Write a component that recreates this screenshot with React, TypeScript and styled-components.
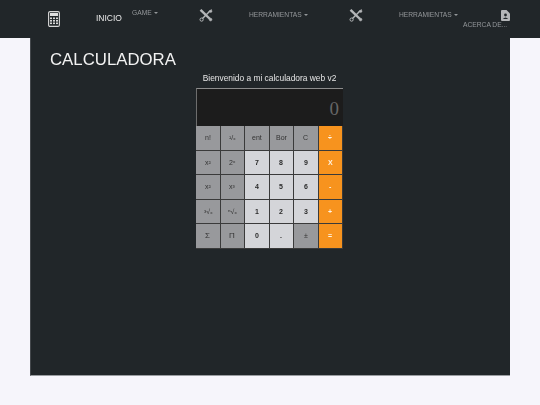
import React from "react";
import styled, { createGlobalStyle } from "styled-components";

const GlobalStyle = createGlobalStyle`
  html, body {
    margin: 0;
    padding: 0;
    background: #f6f5fb;
    font-family: "Liberation Sans", Arial, sans-serif;
  }
`;

const Page = styled.div`
  width: 540px;
  height: 405px;
  overflow: hidden;
`;

const NavBar = styled.nav`
  height: 38px;
  background: #212629;
  display: flex;
  position: relative;
`;

const NavSlot = styled.div<{ $left: number; $width: number }>`
  margin-left: ${(p) => p.$left}px;
  width: ${(p) => p.$width}px;
  flex: none;
  height: 38px;
  display: flex;
  flex-direction: column;
  align-items: center;
`;

const IconWrap = styled.span<{ $top: number }>`
  display: block;
  margin-top: ${(p) => p.$top}px;
  line-height: 0;
`;

const NavLink = styled.span<{ $top: number; $size?: number; $color?: string }>`
  margin-top: ${(p) => p.$top}px;
  font-size: ${(p) => p.$size ?? 6.7}px;
  line-height: 10px;
  color: ${(p) => p.$color ?? "#94979a"};
  white-space: nowrap;
  will-change: transform;
`;

const Caret = styled.i`
  display: inline-block;
  margin-left: 2px;
  vertical-align: 1.5px;
  border-top: 2px solid #94979a;
  border-left: 2px solid transparent;
  border-right: 2px solid transparent;
`;

const AboutLabel = styled.span`
  font-size: 6.7px;
  line-height: 9px;
  color: #94979a;
  white-space: nowrap;
  margin-top: -1px;
  margin-right: 40px;
  will-change: transform;
`;

const Panel = styled.main`
  width: 480px;
  height: 338px;
  margin-left: 30px;
  box-sizing: border-box;
  background: #212629;
  border-bottom: 1px solid #9a9da1;
  border-left: 1px solid #44484c;
  padding: 11px 0 0 19px;
`;

const Title = styled.h1`
  margin: 0;
  font-size: 16.8px;
  line-height: 21px;
  font-weight: 400;
  color: #f2f2f2;
  will-change: transform;
`;

const Greeting = styled.p`
  margin: 2px 0 0 146px;
  width: 147px;
  font-size: 8.4px;
  line-height: 12px;
  color: #e6e6e6;
  text-align: center;
  white-space: nowrap;
  will-change: transform;
`;

const Calc = styled.div`
  margin: 4px 0 0 146px;
  width: 147px;
  display: flex;
  flex-direction: column;
`;

const Display = styled.div`
  height: 38px;
  box-sizing: border-box;
  background: #1c1c1c;
  border-top: 1px solid #8d8d8d;
  border-left: 1px solid #6d6d6d;
  display: flex;
  align-items: center;
  justify-content: flex-end;
  padding: 2px 4px 0 0;
  font-family: "Liberation Serif", serif;
  font-size: 19px;
  color: #666;
`;

const Keys = styled.div`
  display: grid;
  grid-template-columns: repeat(6, 24.5px);
  grid-auto-rows: 24.5px;
`;

type Kind = "dark" | "light" | "op";

const Key = styled.button<{ $kind: Kind; $big?: boolean }>`
  appearance: none;
  margin: 0;
  padding: 0;
  border: none;
  border-right: 1px solid #3a3a3a;
  border-bottom: 1px solid #3a3a3a;
  font-family: "Liberation Sans", Arial, sans-serif;
  font-size: ${(p) => (p.$big ? 8 : 7)}px;
  font-weight: ${(p) => (p.$kind === "dark" ? 400 : 700)};
  color: ${(p) => (p.$kind === "op" ? "#fdf3e4" : p.$kind === "light" ? "#2a2a2a" : "#333")};
  background: ${(p) => (p.$kind === "op" ? "#f7931e" : p.$kind === "light" ? "#d4d5d9" : "#98999c")};
`;

const KeyLabel = styled.span`
  display: inline-block;
  will-change: transform;
`;

const ToolsIcon = () => (
  <svg width="14" height="13" viewBox="0 0 14 13" fill="none" stroke="#b4b6b8">
    <path d="M3.5 9.5 L11.5 1.5" strokeWidth="1.5" />
    <path d="M1.5 .8 L11 10" strokeWidth="2.4" />
    <path d="M9.5 2.5 L12.5 .5 L13 3 L11 3.5" fill="#b4b6b8" strokeWidth=".5" />
    <circle cx="2.6" cy="10.6" r="1.6" strokeWidth="1" />
    <circle cx="11.6" cy="10.6" r="1.4" fill="#b4b6b8" strokeWidth=".5" />
  </svg>
);

const CalcIcon = () => (
  <svg width="12" height="16" viewBox="0 0 12 16" fill="none">
    <rect x=".6" y=".6" width="10.8" height="14.8" rx="1.4" stroke="#d8d8d8" strokeWidth="1.1" />
    <rect x="2" y="2" width="8" height="3" fill="#e0e0e0" />
    {[2, 5, 8].flatMap((x) =>
      [6.5, 9, 11.5].map((y) => <rect key={`${x}-${y}`} x={x} y={y} width="2" height="1.6" fill="#d8d8d8" />)
    )}
  </svg>
);

const FileIcon = () => (
  <svg width="9" height="11" viewBox="0 0 9 11">
    <path d="M0 1 Q0 0 1 0 H5.5 L9 3.5 V10 Q9 11 8 11 H1 Q0 11 0 10 Z" fill="#b4b6b8" />
    <circle cx="4.5" cy="5" r="1.4" fill="#212629" />
    <path d="M1.8 9 Q4.5 5.8 7.2 9 Z" fill="#212629" />
  </svg>
);

const rows: [string, Kind][][] = [
  [["n!", "dark"], ["¹/ₓ", "dark"], ["ent", "dark"], ["Bor", "dark"], ["C", "dark"], ["÷", "op"]],
  [["x²", "dark"], ["2ˣ", "dark"], ["7", "light"], ["8", "light"], ["9", "light"], ["X", "op"]],
  [["x²", "dark"], ["x³", "dark"], ["4", "light"], ["5", "light"], ["6", "light"], ["-", "op"]],
  [["³√ₓ", "dark"], ["ⁿ√ₓ", "dark"], ["1", "light"], ["2", "light"], ["3", "light"], ["+", "op"]],
  [["Σ", "dark"], ["Π", "dark"], ["0", "light"], [".", "light"], ["±", "dark"], ["=", "op"]],
];

export default function App() {
  return (
    <Page>
      <GlobalStyle />
      <NavBar>
        <NavSlot $left={48} $width={12}>
          <IconWrap $top={11}>
            <CalcIcon />
          </IconWrap>
        </NavSlot>
        <NavSlot $left={36} $width={26}>
          <NavLink $top={13} $size={8.5} $color="#e8e8e8">
            INICIO
          </NavLink>
        </NavSlot>
        <NavSlot $left={10} $width={26}>
          <NavLink $top={8}>
            GAME
            <Caret />
          </NavLink>
        </NavSlot>
        <NavSlot $left={41} $width={14}>
          <IconWrap $top={9}>
            <ToolsIcon />
          </IconWrap>
        </NavSlot>
        <NavSlot $left={36} $width={58}>
          <NavLink $top={10}>
            HERRAMIENTAS
            <Caret />
          </NavLink>
        </NavSlot>
        <NavSlot $left={42} $width={14}>
          <IconWrap $top={9}>
            <ToolsIcon />
          </IconWrap>
        </NavSlot>
        <NavSlot $left={36} $width={58}>
          <NavLink $top={10}>
            HERRAMIENTAS
            <Caret />
          </NavLink>
        </NavSlot>
        <NavSlot $left={44} $width={9}>
          <IconWrap $top={10}>
            <FileIcon />
          </IconWrap>
          <AboutLabel>ACERCA DE...</AboutLabel>
        </NavSlot>
      </NavBar>
      <Panel>
        <Title>CALCULADORA</Title>
        <Greeting>Bienvenido a mi calculadora web v2</Greeting>
        <Calc>
          <Display>0</Display>
          <Keys>
            {rows.flat().map(([label, kind], i) => (
              <Key key={i} $kind={kind} $big={label === "Σ" || label === "Π"}>
                <KeyLabel>{label}</KeyLabel>
              </Key>
            ))}
          </Keys>
        </Calc>
      </Panel>
    </Page>
  );
}
